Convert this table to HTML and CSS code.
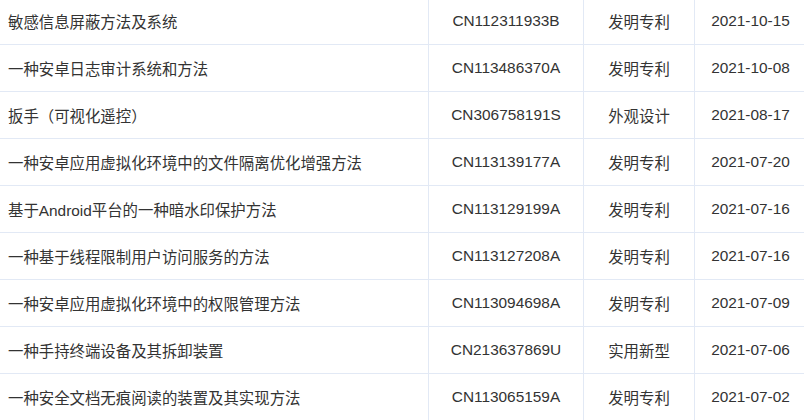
FILE: index.html
```html
<!DOCTYPE html>
<html lang="zh">
<head>
<meta charset="utf-8">
<link rel="stylesheet" href="styles.css">
</head>
<body>
<div class="table">
  <div class="row"><div class="cell name">敏感信息屏蔽方法及系统</div><div class="cell">CN112311933B</div><div class="cell">发明专利</div><div class="cell">2021-10-15</div></div>
  <div class="row"><div class="cell name">一种安卓日志审计系统和方法</div><div class="cell">CN113486370A</div><div class="cell">发明专利</div><div class="cell">2021-10-08</div></div>
  <div class="row"><div class="cell name">扳手（可视化遥控）</div><div class="cell">CN306758191S</div><div class="cell">外观设计</div><div class="cell">2021-08-17</div></div>
  <div class="row"><div class="cell name">一种安卓应用虚拟化环境中的文件隔离优化增强方法</div><div class="cell">CN113139177A</div><div class="cell">发明专利</div><div class="cell">2021-07-20</div></div>
  <div class="row"><div class="cell name">基于Android平台的一种暗水印保护方法</div><div class="cell">CN113129199A</div><div class="cell">发明专利</div><div class="cell">2021-07-16</div></div>
  <div class="row"><div class="cell name">一种基于线程限制用户访问服务的方法</div><div class="cell">CN113127208A</div><div class="cell">发明专利</div><div class="cell">2021-07-16</div></div>
  <div class="row"><div class="cell name">一种安卓应用虚拟化环境中的权限管理方法</div><div class="cell">CN113094698A</div><div class="cell">发明专利</div><div class="cell">2021-07-09</div></div>
  <div class="row"><div class="cell name">一种手持终端设备及其拆卸装置</div><div class="cell">CN213637869U</div><div class="cell">实用新型</div><div class="cell">2021-07-06</div></div>
  <div class="row"><div class="cell name">一种安全文档无痕阅读的装置及其实现方法</div><div class="cell">CN113065159A</div><div class="cell">发明专利</div><div class="cell">2021-07-02</div></div>
</div>
</body>
</html>
```

FILE: styles.css
```css
html, body {
  margin: 0;
  padding: 0;
  background: #ffffff;
}
body {
  font-family: "Liberation Sans", "Noto Sans CJK SC", sans-serif;
  font-size: 15.4px;
  color: #333333;
  overflow: hidden;
}
.table {
  margin-top: -2px;
  width: 806px;
}
.row {
  display: grid;
  grid-template-columns: 429px 155px 111px 1fr;
  border-bottom: 1px solid #e2e9f5;
}
.cell {
  height: 46px;
  display: flex;
  align-items: center;
  justify-content: center;
  border-right: 1px solid #e2e9f5;
  white-space: nowrap;
}
.cell:last-child {
  border-right: none;
}
.cell.name {
  justify-content: flex-start;
  padding-left: 8px;
}
```
